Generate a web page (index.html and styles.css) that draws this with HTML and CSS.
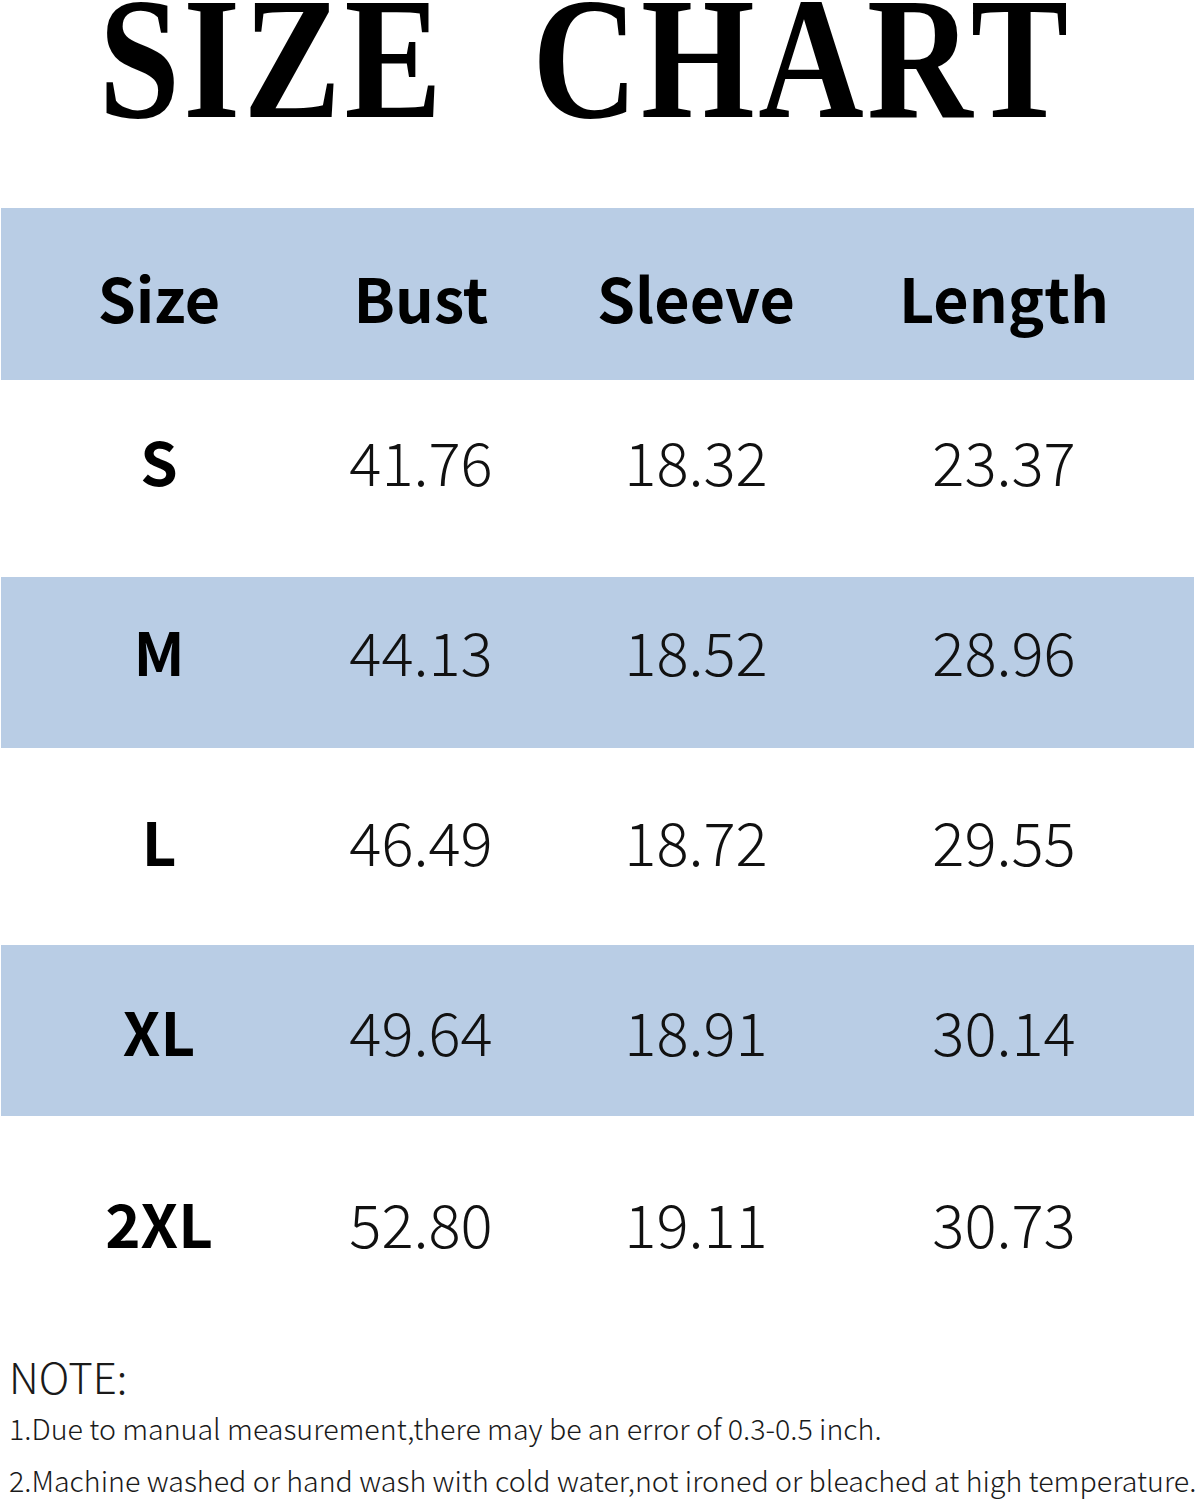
FILE: index.html
```html
<!DOCTYPE html>
<html lang="en">
<head>
<meta charset="utf-8">
<title>Size Chart</title>
<link rel="stylesheet" href="styles.css">
</head>
<body>
<div class="page">
  <h1 class="title"><span class="title-text">SIZE CHART</span></h1>
  <div class="chart">
    <div class="row head">
      <div class="cell">Size</div>
      <div class="cell">Bust</div>
      <div class="cell">Sleeve</div>
      <div class="cell">Length</div>
    </div>
    <div class="row plain r1">
      <div class="cell size">S</div>
      <div class="cell">41.76</div>
      <div class="cell">18.32</div>
      <div class="cell">23.37</div>
    </div>
    <div class="row band r2">
      <div class="cell size">M</div>
      <div class="cell">44.13</div>
      <div class="cell">18.52</div>
      <div class="cell">28.96</div>
    </div>
    <div class="row plain r3">
      <div class="cell size">L</div>
      <div class="cell">46.49</div>
      <div class="cell">18.72</div>
      <div class="cell">29.55</div>
    </div>
    <div class="row band r4">
      <div class="cell size">XL</div>
      <div class="cell">49.64</div>
      <div class="cell">18.91</div>
      <div class="cell">30.14</div>
    </div>
    <div class="row plain r5">
      <div class="cell size">2XL</div>
      <div class="cell">52.80</div>
      <div class="cell">19.11</div>
      <div class="cell">30.73</div>
    </div>
  </div>
  <div class="note">
    <p class="note-title">NOTE:</p>
    <p class="note-line">1.Due to manual measurement,there may be an error of 0.3-0.5 inch.</p>
    <p class="note-line">2.Machine washed or hand wash with cold water,not ironed or bleached at high temperature.</p>
  </div>
</div>
</body>
</html>
```

FILE: styles.css
```css
html, body {
  margin: 0;
  padding: 0;
  background: #ffffff;
}

.page {
  width: 1199px;
  height: 1500px;
  overflow: hidden;
  color: #000;
}

.title {
  display: flex;
  justify-content: center;
  margin: 0 0 88px 0;
  height: 120px;
  padding-right: 28px;
  font-family: "Liberation Serif", "Times New Roman", serif;
  font-weight: 700;
  font-size: 174px;
  line-height: 117px;
  white-space: nowrap;
}

.title-text {
  flex: none;
  display: block;
  letter-spacing: 4px;
  word-spacing: 56px;
  transform: scaleX(0.84);
  transform-origin: center;
}

.chart {
  margin-left: 1px;
  width: 1193px;
}

.row {
  display: grid;
  grid-template-columns: 316px 208px 342px 274px 53px;
  align-items: center;
  font-family: "Noto Sans CJK SC", "Noto Sans", sans-serif;
}

.head {
  height: 172px;
  background: #b9cde5;
  font-weight: 700;
  font-size: 61px;
}

.head .cell {
  margin-top: 4px;
}

.plain {
  height: 197px;
  background: #ffffff;
}

.band {
  height: 171px;
  background: #b9cde5;
}

.cell {
  text-align: center;
  line-height: 1;
}

.plain .cell,
.band .cell {
  font-size: 60px;
  font-weight: 300;
  color: #111;
}

.plain .size,
.band .size {
  font-weight: 700;
  color: #000;
}

.r1 .cell { margin-top: -38px; }
.r2 .cell { margin-top: -26px; }
.r3 .cell { margin-top: -14px; }
.r4 .cell { margin-top: -2px; }
.r5 {
  height: 194px;
}
.r5 .cell { margin-top: 18px; }

.note {
  padding-left: 9px;
  padding-top: 40px;
  font-family: "Noto Sans CJK SC", "Noto Sans", sans-serif;
  font-weight: 300;
  color: #1a1a1a;
}

.note p {
  margin: 0;
  white-space: nowrap;
}

.note-title {
  font-size: 42px;
  line-height: 52px;
}

.note-line {
  font-size: 28.6px;
  line-height: 52px;
}
```
